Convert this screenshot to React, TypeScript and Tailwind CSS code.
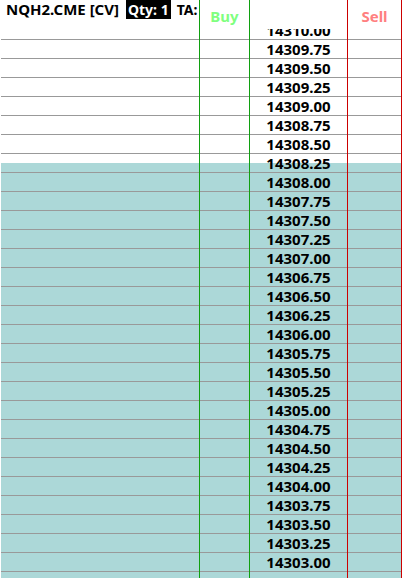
const prices: string[] = [];
for (let i = 0; i < 28; i++) {
  prices.push((14309.75 - i * 0.25).toFixed(2));
}
prices.push("");

const tealFrom = 6; // 14308.25 row is half white, half teal

function rowBg(i: number) {
  if (i < tealFrom) return "bg-white";
  if (i === tealFrom) return "bg-[linear-gradient(to_bottom,white_9px,#acd8d8_9px)]";
  return "bg-[#acd8d8]";
}

const font = { fontFamily: '"Noto Sans", "Open Sans", sans-serif' };

export default function App() {
  return (
    <div className="flex h-screen overflow-hidden bg-white pl-px" style={font}>
      {/* left column */}
      <div className="flex w-[199px] shrink-0 flex-col border-r border-[#10a010]">
        <div className="flex h-[40px] shrink-0 items-start overflow-hidden whitespace-nowrap border-b border-[#999] pl-[5px] text-[15px] font-bold leading-[19px] text-black">
          <span>NQH2.CME [CV]</span>
          <span className="ml-[7px] bg-black px-[2px] text-[14px] text-white">Qty: 1</span>
          <span className="ml-[6px] text-[14px]">TA:</span>
        </div>
        {prices.map((p, i) => (
          <div key={i} className={`h-[19px] shrink-0 border-b border-[#999] ${rowBg(i)}`} />
        ))}
      </div>

      {/* buy column */}
      <div className="flex w-[50px] shrink-0 flex-col border-r border-[#10a010]">
        <div className="flex h-[40px] shrink-0 justify-center border-b border-[#999] pt-[7px] text-[15px] font-bold leading-[19px] text-[#80ff80]">
          Buy
        </div>
        {prices.map((p, i) => (
          <div key={i} className={`h-[19px] shrink-0 border-b border-[#999] ${rowBg(i)}`} />
        ))}
      </div>

      {/* price column */}
      <div className="flex w-[98px] shrink-0 flex-col border-r border-[#cc0000]">
        <div className="flex h-[40px] shrink-0 flex-col justify-end border-b border-[#999]">
          <div className="flex h-[10px] flex-col justify-end overflow-hidden">
            <div className="h-[18px] shrink-0 text-center text-[15px] font-bold leading-[18px] text-black">14310.00</div>
          </div>
        </div>
        {prices.map((p, i) => (
          <div
            key={i}
            className={`h-[19px] shrink-0 border-b border-[#999] text-center text-[15px] font-bold leading-[18px] text-black ${rowBg(i)}`}
          >
            {p}
          </div>
        ))}
      </div>

      {/* sell column */}
      <div className="flex w-[54px] shrink-0 flex-col border-r border-[#cc0000]">
        <div className="flex h-[40px] shrink-0 justify-center border-b border-[#999] pt-[7px] text-[15px] font-bold leading-[19px] text-[#ff8080]">
          Sell
        </div>
        {prices.map((p, i) => (
          <div key={i} className={`h-[19px] shrink-0 border-b border-[#999] ${rowBg(i)}`} />
        ))}
      </div>
    </div>
  );
}
